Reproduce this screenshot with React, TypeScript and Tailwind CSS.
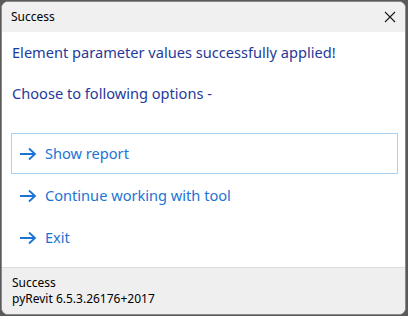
export default function App() {
  const options = ['Show report', 'Continue working with tool', 'Exit']
  return (
    <div
      className="h-[316px] w-[408px] bg-[#5a5a5a] p-px pr-[2px]"
      style={{ fontFamily: '"Noto Sans", "Open Sans", sans-serif' }}
    >
      <div className="flex h-[314px] flex-col overflow-hidden rounded-[7px] border border-[#8a8a8a] bg-white">
        <div className="flex h-[30px] shrink-0 items-center justify-between bg-[#f0f0f0] pl-[9px] pr-[9px]">
          <span className="text-[12px] text-black">Success</span>
          <svg width="12" height="12" viewBox="0 0 12 12" fill="none" stroke="#1a1a1a" strokeWidth="1.1">
            <path d="M1 1l10 10M11 1L1 11" />
          </svg>
        </div>
        <div className="flex flex-1 flex-col pl-[9px] pr-[7px] pt-[9px]">
          <p className="pl-px text-[14.6px] leading-[22px] text-[#1f3a9a]">Element parameter values successfully applied!</p>
          <p className="mt-[19px] pl-px text-[14.6px] leading-[22px] text-[#1f3a9a]">Choose to following options -</p>
          <div className="mt-[29px] flex flex-col gap-px">
            {options.map((o, i) => (
              <div
                key={o}
                className={`flex h-[41px] items-center gap-[8px] border pl-[7px] text-[14.6px] text-[#1b74d4] ${
                  i === 0 ? 'border-[#a9d2f5]' : 'border-transparent'
                }`}
              >
                <svg width="18" height="14" viewBox="0 0 18 14" fill="none" stroke="#1b74d4" strokeWidth="1.8">
                  <path d="M1 7h15M10 1.5L16 7l-6 5.5" />
                </svg>
                <span>{o}</span>
              </div>
            ))}
          </div>
        </div>
        <div className="flex h-[47px] shrink-0 flex-col justify-center border-t border-[#dcdcdc] bg-[#efefef] pl-[10px] text-[12px] leading-[16px] text-black">
          <span>Success</span>
          <span>pyRevit 6.5.3.26176+2017</span>
        </div>
      </div>
    </div>
  )
}
